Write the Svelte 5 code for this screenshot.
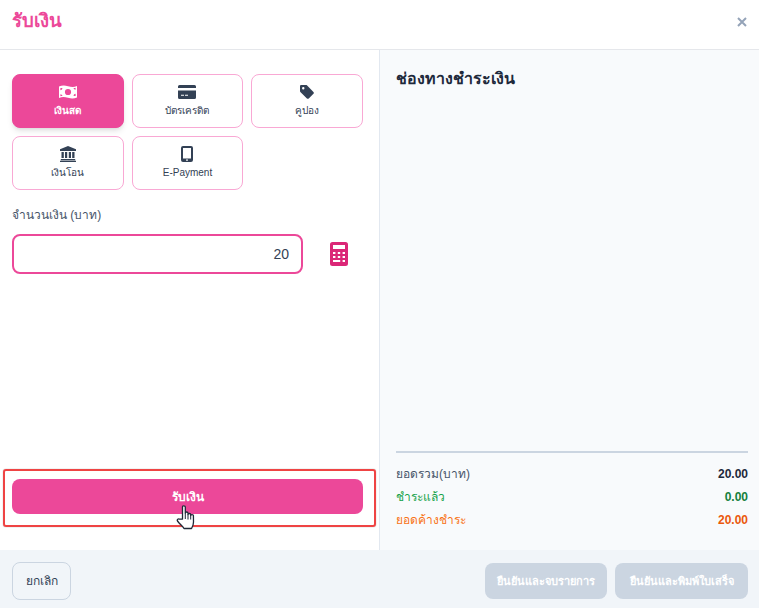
<script>
    let methods = [
        { id: "cash", label: "เงินสด" },
        { id: "card", label: "บัตรเครดิต" },
        { id: "coupon", label: "คูปอง" },
        { id: "bank", label: "เงินโอน" },
        { id: "epay", label: "E-Payment" }
    ];
    let active = "cash";
    let amount = "20";
</script>

<div class="modal">
    <header>
        <h1>รับเงิน</h1>
        <button class="close" aria-label="close">
            <svg width="10" height="10" viewBox="0 0 10 10"><path d="M1 1l8 8M9 1l-8 8" stroke="#94a3b8" stroke-width="2" /></svg>
        </button>
    </header>

    <div class="body">
        <section class="left">
            <div class="methods">
                {#each methods as m}
                    <button class="method" class:active={active === m.id} on:click={() => (active = m.id)}>
                        <span class="icon">
                            {#if m.id === "cash"}
                                <svg width="18" height="14" viewBox="0 0 18 14">
                                    <path fill-rule="evenodd" fill="currentColor" d="M0 1.6C3 .2 6 .4 9 1.2s6 1.2 9-.2v11.4c-3 1.4-6 1.2-9 .4s-6-1.2-9 .2zM9 3.9a3 3 0 1 0 0 6.2 3 3 0 0 0 0-6.2zM1.4 3v2.2C2.6 5.200 3.300 4.300 3.400 3c-.7-.1-1.300-.1-2 0zM14.600 11c.7.100 1.300.100 2 0V8.800c-1.200 0-1.900.900-2 2.200zM1.400 9.200v2c.7-.2 1.300-.200 2-.200-.1-1-.9-1.700-2-1.800zM16.600 2.800c-.7.200-1.300.200-2 .200.1 1 .9 1.700 2 1.800z" />
                                </svg>
                            {:else if m.id === "card"}
                                <svg width="18" height="14" viewBox="0 0 18 14">
                                    <path fill="currentColor" d="M1.500 0h15A1.500 1.500 0 0 1 18 1.500V3H0V1.500A1.500 1.500 0 0 1 1.500 0zM0 5.500h18v7a1.500 1.500 0 0 1-1.500 1.500h-15A1.500 1.500 0 0 1 0 12.500zM3 9.800v1h3v-1zm4 0v1h3v-1z" fill-rule="evenodd" />
                                </svg>
                            {:else if m.id === "coupon"}
                                <svg width="14" height="14" viewBox="0 0 15 15">
                                    <path fill="currentColor" fill-rule="evenodd" d="M1.400 0h5c.4 0 .8.200 1 .4l7 7c.6.600.6 1.400 0 2l-5 5c-.6.600-1.400.600-2 0l-7-7C.200 7.200 0 6.800 0 6.400v-5C0 .6.600 0 1.400 0zM3.500 2.200a1.300 1.300 0 1 0 0 2.600 1.300 1.300 0 0 0 0-2.600z" />
                                </svg>
                            {:else if m.id === "bank"}
                                <svg width="16" height="16" viewBox="0 0 16 16">
                                    <path fill="currentColor" d="M8 0l8 3.200V5H0V3.200zM1.500 6h2.300v6H1.500zM5 6h2.200v6H5zM8.800 6H11v6H8.800zM12.200 6h2.300v6h-2.300zM.8 13h14.400v1.300H.8zM0 14.800h16V16H0z" />
                                </svg>
                            {:else}
                                <svg width="12" height="16" viewBox="0 0 12 16">
                                    <path fill="currentColor" fill-rule="evenodd" d="M2 0h8a2 2 0 0 1 2 2v12a2 2 0 0 1-2 2H2a2 2 0 0 1-2-2V2a2 2 0 0 1 2-2zm0 2v10.500h8V2zm4 11.200a.9.900 0 1 0 0 1.800.9.900 0 0 0 0-1.800z" />
                                </svg>
                            {/if}
                        </span>
                        <span class="method-label">{m.label}</span>
                    </button>
                {/each}
            </div>

            <label class="amount-label" for="amount">จำนวนเงิน (บาท)</label>
            <div class="amount-row">
                <input id="amount" type="text" bind:value={amount} />
                <button class="calc" aria-label="calculator">
                    <svg width="18" height="24" viewBox="0 0 18 24">
                        <path fill="#db2777" fill-rule="evenodd" d="M2.500 0h13A2.500 2.500 0 0 1 18 2.500v19a2.500 2.500 0 0 1-2.500 2.500h-13A2.500 2.500 0 0 1 0 21.500v-19A2.500 2.500 0 0 1 2.500 0zM3 3v4h12V3zm0 7v2h2.400v-2zm4.800 0v2h2.400v-2zm4.800 0v2H15v-2zM3 14v2h2.400v-2zm4.800 0v2h2.400v-2zm4.800 0v2H15v-2zM3 18v2h7.200v-2zm9.600 0v2H15v-2z" />
                    </svg>
                </button>
            </div>

            <button class="receive">รับเงิน</button>
        </section>

        <section class="right">
            <h2>ช่องทางชำระเงิน</h2>
            <div class="summary">
                <div class="row"><span>ยอดรวม(บาท)</span><b class="dark">20.00</b></div>
                <div class="row green"><span>ชำระแล้ว</span><b>0.00</b></div>
                <div class="row orange"><span>ยอดค้างชำระ</span><b>20.00</b></div>
            </div>
        </section>
    </div>

    <footer>
        <button class="cancel">ยกเลิก</button>
        <div class="confirm">
            <button disabled>ยืนยันและจบรายการ</button>
            <button disabled>ยืนยันและพิมพ์ใบเสร็จ</button>
        </div>
    </footer>

    <!-- annotation over the screenshot -->
    <div class="highlight"></div>
    <svg class="pointer" width="20" height="25" viewBox="0 0 20 25">
        <path fill="#fff" stroke="#1f2937" stroke-width="1.300" stroke-linejoin="round" d="M6.500 14V2c0-1.600 2.800-1.600 2.800 0v6c0-1.300 2.700-1.300 2.700 0v1.500c0-1.300 2.700-1.300 2.700 0v1c0-1.300 2.700-1.300 2.700 0l.1 6.500c0 3-1 4.500-2 6.500H8C7 21.500 4 19.500 1.500 16c-.8-1.300.8-2.600 2-1.800z" />
        <path fill="none" stroke="#1f2937" stroke-width="1" d="M9.300 8v6M12 9.500v5M14.700 10.500v4" />
    </svg>
</div>

<style>
    :global(body) {
        font-family: "Liberation Sans", "Noto Sans", "DejaVu Sans", sans-serif;
        color: #1e293b;
    }

    .modal {
        position: relative;
        display: flex;
        flex-direction: column;
        height: 608px;
        width: 759px;
        background: #fff;
        overflow: hidden;
    }

    header {
        display: flex;
        justify-content: space-between;
        align-items: center;
        height: 49px;
        padding: 0 12px;
        border-bottom: 1px solid #e5e7eb;
        flex: none;
    }

    h1 {
        margin: 0 0 8px;
        font-size: 18.500px;
        font-weight: 700;
        color: #ec4899;
    }

    .close {
        border: none;
        background: none;
        padding: 0;
        display: flex;
        margin-bottom: 5px;
    }

    .body {
        flex: 1;
        display: flex;
        min-height: 0;
    }

    .left {
        width: 380px;
        box-sizing: border-box;
        padding: 24px 16px 36px 12px;
        display: flex;
        flex-direction: column;
        border-right: 1px solid #e2e8f0;
        flex: none;
    }

    .methods {
        display: grid;
        grid-template-columns: repeat(3, 1fr);
        gap: 8px;
    }

    .method {
        height: 54px;
        display: flex;
        flex-direction: column;
        align-items: center;
        padding: 0;
        background: #fff;
        border: 1px solid #f9a8d4;
        border-radius: 8px;
        color: #334155;
        font-family: inherit;
    }

    .method.active {
        background: #ec4899;
        border-color: #ec4899;
        color: #fff;
        font-weight: 700;
        box-shadow: 0 4px 6px -1px rgba(0, 0, 0, 0.1), 0 2px 4px -2px rgba(0, 0, 0, 0.1);
    }

    .icon {
        height: 16px;
        margin-top: 9px;
        display: flex;
        align-items: center;
        justify-content: center;
    }

    .method .icon {
        color: #334155;
    }

    .method.active .icon {
        color: #fff;
    }

    .method-label {
        font-size: 10px;
        line-height: 14px;
        margin-top: 4px;
    }

    .amount-label {
        font-size: 12px;
        line-height: 16px;
        color: #475569;
        margin-top: 17px;
    }

    .amount-row {
        display: flex;
        align-items: center;
        margin-top: 11px;
    }

    input {
        width: 291px;
        height: 40px;
        box-sizing: border-box;
        border: 2px solid #ec4899;
        border-radius: 8px;
        padding: 0 12px;
        text-align: right;
        font-size: 14px;
        font-family: inherit;
        color: #334155;
        outline: none;
    }

    .calc {
        border: none;
        background: none;
        padding: 0;
        margin-left: 27px;
        display: flex;
    }

    .receive {
        margin-top: auto;
        height: 35px;
        border: none;
        border-radius: 8px;
        background: #ec4899;
        color: #fff;
        font-size: 12px;
        font-weight: 700;
        font-family: inherit;
    }

    .right {
        flex: 1;
        display: flex;
        flex-direction: column;
        background: #f8fafc;
        padding: 19px 11px 19px 16px;
    }

    h2 {
        margin: 0;
        font-size: 16px;
        line-height: 20px;
        font-weight: 700;
        color: #1e293b;
    }

    .summary {
        margin-top: auto;
        border-top: 2px solid #cbd5e1;
        padding-top: 9px;
        display: flex;
        flex-direction: column;
    }

    .row {
        display: flex;
        justify-content: space-between;
        align-items: center;
        height: 23px;
        font-size: 12px;
        color: #475569;
    }

    .row b {
        font-weight: 700;
    }

    .dark {
        color: #1e293b;
    }

    .green {
        color: #16a34a;
    }

    .green b {
        color: #15803d;
    }

    .orange {
        color: #f97316;
    }

    .orange b {
        color: #ea580c;
    }

    footer {
        flex: none;
        height: 58px;
        box-sizing: border-box;
        background: #f1f5f9;
        display: flex;
        justify-content: space-between;
        align-items: center;
        padding: 3px 11px 0 12px;
    }

    footer button {
        font-family: inherit;
        font-size: 11px;
        border-radius: 8px;
    }

    .cancel {
        width: 59px;
        height: 38px;
        background: transparent;
        border: 1px solid #cbd5e1;
        color: #334155;
        font-size: 12px;
    }

    .confirm {
        display: flex;
        gap: 8px;
    }

    .confirm button {
        height: 36px;
        border: none;
        background: #cbd5e1;
        color: #fff;
        font-weight: 700;
        padding: 0;
    }

    .confirm button:first-child {
        width: 122px;
    }

    .confirm button:last-child {
        width: 133px;
    }

    .highlight {
        position: absolute;
        left: 3px;
        top: 469px;
        width: 373px;
        height: 58px;
        box-sizing: border-box;
        border: 2px solid #ef4444;
        border-radius: 3px;
        box-shadow: 0 0 1px rgba(0, 0, 0, 0.5);
        pointer-events: none;
    }

    .pointer {
        position: absolute;
        left: 176px;
        top: 505px;
        pointer-events: none;
    }
</style>
